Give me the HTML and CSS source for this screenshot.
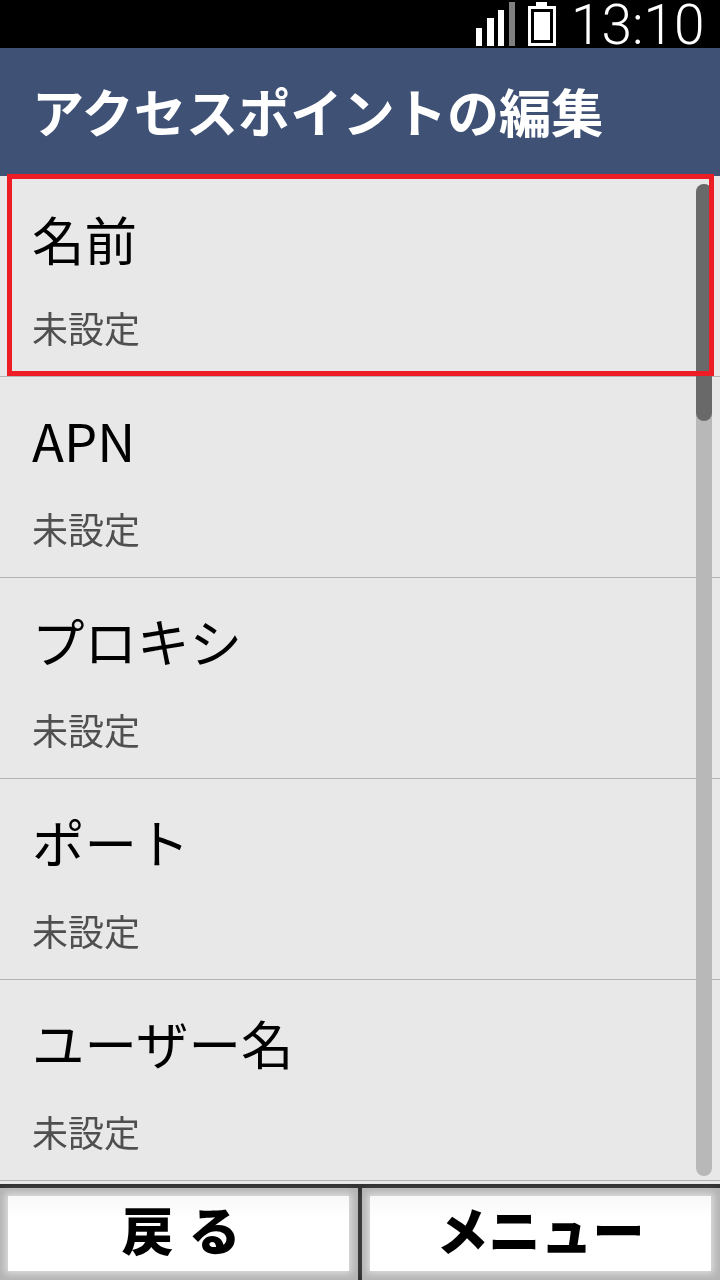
FILE: index.html
```html
<!DOCTYPE html>
<html lang="ja">
  <head>
    <meta charset="UTF-8" />
    <meta name="viewport" content="width=device-width, initial-scale=1.0" />
    <title>アクセスポイントの編集</title>
    <link rel="stylesheet" href="styles.css">
  </head>
  <body>
    <div class="status-bar">
      <svg class="signal" width="40" height="46" viewBox="0 0 40 46">
        <rect x="0" y="28" width="6" height="18" fill="#fff" />
        <rect x="11" y="18" width="7" height="28" fill="#fff" />
        <rect x="22" y="10" width="6" height="36" fill="#fff" />
        <rect x="33" y="2" width="6" height="44" fill="#808080" />
      </svg>
      <svg class="battery" width="28" height="46" viewBox="0 0 28 46">
        <path d="M8 2h11v4h9v40H0V6h8z" fill="#fff" />
        <rect x="3" y="9" width="22" height="34" fill="#000" />
        <rect x="6" y="12" width="16" height="28" fill="#fff" />
      </svg>
      <span class="clock">13:10</span>
    </div>

    <div class="title-bar">アクセスポイントの編集</div>

    <div class="list">
      <div class="item">
        <div class="item-name">名前</div>
        <div class="item-value">未設定</div>
      </div>
      <div class="item">
        <div class="item-name">APN</div>
        <div class="item-value">未設定</div>
      </div>
      <div class="item">
        <div class="item-name">プロキシ</div>
        <div class="item-value">未設定</div>
      </div>
      <div class="item">
        <div class="item-name">ポート</div>
        <div class="item-value">未設定</div>
      </div>
      <div class="item">
        <div class="item-name">ユーザー名</div>
        <div class="item-value">未設定</div>
      </div>
      <div class="scroll-track"></div>
      <div class="scroll-thumb"></div>
      <div class="focus-box"></div>
    </div>

    <div class="footer">
      <div class="soft-key"><div class="soft-key-face back-key">戻 る</div></div>
      <div class="soft-key"><div class="soft-key-face">メニュー</div></div>
    </div>
  </body>
</html>
```

FILE: styles.css
```css
* {
  box-sizing: border-box;
}
body {
  margin: 0;
  width: 720px;
  height: 1280px;
  overflow: hidden;
  display: flex;
  flex-direction: column;
  background-color: #e8e8e8;
  font-family: "Noto Sans CJK JP", "Noto Sans", sans-serif;
}
.status-bar {
  height: 48px;
  background-color: #000;
  display: flex;
  align-items: flex-start;
  padding-left: 476px;
}
.signal {
  margin-right: 12px;
}
.battery {
  margin-right: 15px;
}
.clock {
  font-family: Roboto, sans-serif;
  font-weight: 300;
  font-size: 55px;
  line-height: 50px;
  color: #fff;
}
.title-bar {
  height: 128px;
  background-color: #3f5175;
  color: #fff;
  font-size: 52.2px;
  font-weight: 700;
  line-height: 124px;
  padding-left: 32px;
  white-space: nowrap;
}
.list {
  position: relative;
  flex: 1;
  will-change: transform;
}
.item {
  height: 201px;
  border-bottom: 1px solid #b4b4b4;
  padding: 0 32px;
}
.item-name {
  height: 128px;
  font-size: 52.5px;
  line-height: 124px;
  color: #000;
}
.item-value {
  font-size: 36px;
  line-height: 46px;
  color: #4f4f4f;
}
.scroll-track,
.scroll-thumb {
  position: absolute;
  left: 696px;
  width: 16px;
  border-radius: 8px;
}
.scroll-track {
  top: 8px;
  height: 992px;
  background-color: #b8b8b8;
}
.scroll-thumb {
  top: 8px;
  height: 237px;
  background-color: #696969;
}
.focus-box {
  position: absolute;
  left: 7px;
  top: -2px;
  width: 707px;
  height: 202px;
  border: 5px solid #ee1c25;
}
.footer {
  height: 96px;
  border-top: 4px solid #333;
  display: flex;
}
.soft-key {
  flex: 1;
  padding: 8px 9px 9px 8px;
  background-color: #b4b4b4;
}
.soft-key:first-child {
  border-right: 4px solid #333;
}
.soft-key-face {
  height: 75px;
  background: linear-gradient(#f8f8f8, #fff 30%);
  box-shadow: 0 0 7px 3px #dcdcdc;
  color: #000;
  font-size: 52px;
  font-weight: 900;
  line-height: 66px;
  text-align: center;
  white-space: nowrap;
}
.back-key {
  padding-left: 5px;
  word-spacing: 3px;
}
```
